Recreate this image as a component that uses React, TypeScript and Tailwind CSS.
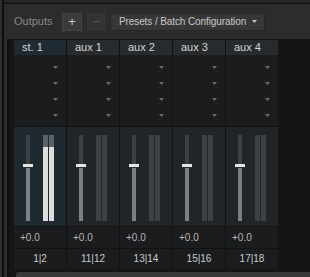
import React from "react";

const cols = [
  { name: "st. 1", ch: "1|2", active: true },
  { name: "aux 1", ch: "11|12", active: false },
  { name: "aux 2", ch: "13|14", active: false },
  { name: "aux 3", ch: "15|16", active: false },
  { name: "aux 4", ch: "17|18", active: false },
];

function Arrow({ color }: { color: string }) {
  return (
    <svg width="5" height="3" viewBox="0 0 5 3" className="block shrink-0">
      <path d="M0 0H5L2.5 3Z" fill={color} />
    </svg>
  );
}

function Column({ name, ch, active }: { name: string; ch: string; active: boolean }) {
  return (
    <div className="flex flex-col w-[52px] bg-[#121212]">
      <div
        className={
          "h-[15px] pl-[8px] text-[11px] leading-[15px] text-[#d2d6d8] " +
          (active ? "bg-[#1f2a33]" : "bg-[#272b2e]")
        }
      >
        {name}
      </div>
      <div className="h-[71px] bg-[#1b1c1e] pt-[4px] flex flex-col">
        {[0, 1, 2, 3].map((i) => (
          <div key={i} className="h-[16px] flex items-center justify-end pr-[8px]">
            <Arrow color="#676d72" />
          </div>
        ))}
      </div>
      <div
        className={
          "mt-[1px] h-[99px] flex items-start pt-[8px] pl-[12px] " +
          (active ? "bg-[#1f2a30]" : "bg-[#212527]")
        }
      >
        <div className="relative w-[4px] h-[86px] flex flex-col">
          <div className="h-[30px] bg-[#3b4043]" />
          <div className="flex-1 bg-[#7c8084]" />
          <div className="absolute left-[-3px] top-[29px] w-[10px] h-[4px] bg-[#e4e4e4] border-b border-[#2a2e30]" />
        </div>
        <div className="ml-[13px] flex gap-[1px]">
          {[0, 1].map((i) => (
            <div key={i} className="w-[5px] h-[86px] flex flex-col">
              {active ? (
                <>
                  <div className="h-[12px] bg-[#5b6164]" />
                  <div className="flex-1 bg-[#dedede]" />
                </>
              ) : (
                <div className="flex-1 bg-[#3c4144]" />
              )}
            </div>
          ))}
        </div>
      </div>
      <div className="mt-[1px] h-[21px] bg-[#1b1c1e] pl-[6px] text-[10px] leading-[21px] text-[#b4b6b8]">
        +0.0
      </div>
      <div className="mt-[1px] h-[20px] bg-[#1b1c1e] text-center text-[10px] leading-[20px] text-[#c8cacc]">
        {ch}
      </div>
    </div>
  );
}

export default function App() {
  return (
    <div className="w-[310px] h-[277px] flex bg-[#2b2b2b] overflow-hidden font-['Liberation_Sans',Arial,sans-serif]">
      <div className="w-[2px] bg-[#2e2e2e]" />
      <div className="w-[2px] bg-[#0e0e0e]" />
      <div className="flex-1 flex flex-col">
        <div className="h-[3px] bg-[#242424]" />
        <div className="h-[1px] bg-[#111111]" />
        <div className="h-[35px] bg-[#2c2c2c] flex items-center pl-[10px]">
          <span className="w-[48px] text-[11px] text-[#8a8a8a]">Outputs</span>
          <div className="w-[20px] h-[18px] bg-[#3a3a3a] border border-[#444] flex items-center justify-center text-[13px] leading-none text-[#c8c8c8]">
            +
          </div>
          <div className="ml-[5px] w-[19px] h-[18px] bg-[#333333] flex items-center justify-center text-[13px] leading-none text-[#555]">
            −
          </div>
          <div className="ml-[4px] w-[155px] h-[18px] bg-[#373737] border border-[#262626] flex items-center pl-[8px] pr-[7px] text-[10px] tracking-[-0.1px] text-[#c8c8c8]">
            <span className="flex-1 whitespace-nowrap">Presets / Batch Configuration</span>
            <Arrow color="#c4c4c4" />
          </div>
        </div>
        <div className="flex-1 flex">
          <div className="w-[3px] bg-[#2c2c2c]" />
          <div className="w-[2px] bg-[#0f0f0f]" />
          <div className="flex-1 bg-[#151515] flex flex-col pt-[1px] pl-[5px]">
            <div className="flex gap-[1px] bg-[#121212] w-[264px]">
              {cols.map((c) => (
                <Column key={c.name} {...c} />
              ))}
            </div>
            <div className="mt-[3px] ml-[2px] h-[5px] rounded-tl-[3px] bg-[#393939]" />
          </div>
        </div>
      </div>
    </div>
  );
}
